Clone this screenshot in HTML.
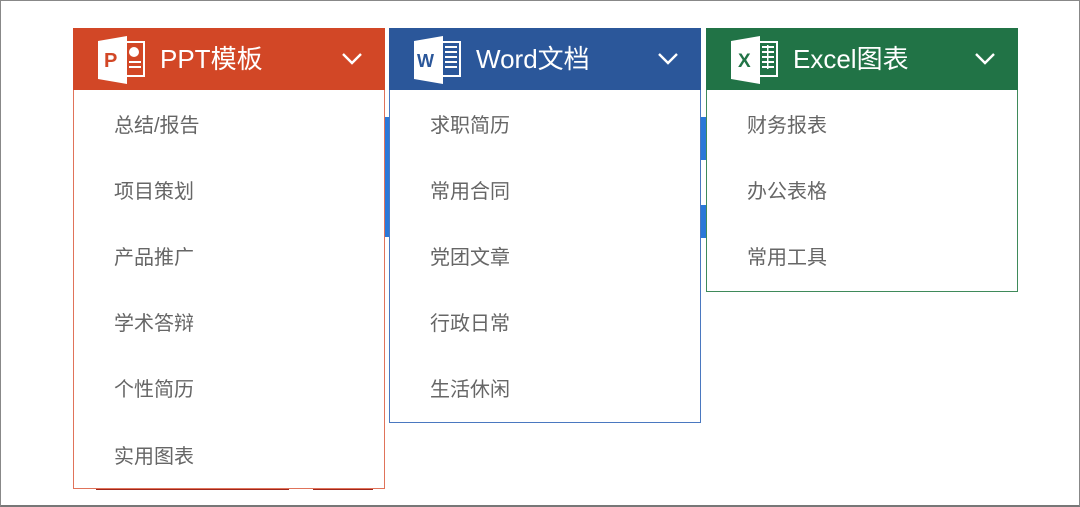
<!DOCTYPE html>
<html><head><meta charset="utf-8"><style>
*{margin:0;padding:0;box-sizing:border-box}
body{width:1080px;height:507px;background:#fff;position:relative;overflow:hidden;font-family:"Liberation Sans","Noto Sans CJK SC",sans-serif}
.frame{position:absolute;left:0;top:0;width:1080px;height:507px;border:1px solid #888;border-bottom:2px solid #777}
.p{position:absolute;top:28px;width:312px;background:#fff}
.h{height:62px;position:relative;color:#fff}
.h .t{position:absolute;left:87px;top:13px;font-size:26px;line-height:36px}
.h svg.ic{position:absolute;left:24px;top:8px}
.h .cv{position:absolute;right:22px;top:24px}
.m{position:absolute;left:40px;font-size:20px;color:#666;line-height:28px}
</style></head><body>
<div class="frame"></div>
<div style="position:absolute;left:384px;top:117px;width:6px;height:120px;background:#2a78d8"></div>
<div style="position:absolute;left:701px;top:117px;width:5px;height:43px;background:#2a78d8"></div>
<div style="position:absolute;left:701px;top:205px;width:5px;height:33px;background:#2a78d8"></div>
<div style="position:absolute;left:96px;top:487px;width:193px;height:3px;background:#a0261c"></div>
<div style="position:absolute;left:313px;top:487px;width:60px;height:3px;background:#a0261c"></div>

<div class="p" style="left:73px;height:461px;border:1px solid #e0735a;border-top:none">
<div class="h" style="background:#d24726;margin:0 -1px">
<svg class="ic" width="50" height="48" viewBox="0 0 50 48"><path d="M1 5 L30 0 L30 48 L1 43Z" fill="#fff"/><rect x="28" y="5" width="20" height="36" fill="#fff"/><rect x="30" y="7" width="16" height="32" fill="#d24726"/><circle cx="37" cy="16" r="5" fill="#fff"/><rect x="32" y="25" width="12" height="2" fill="#fff"/><rect x="32" y="30" width="12" height="2" fill="#fff"/><text x="7" y="31" font-size="20" font-weight="bold" fill="#d24726" font-family="Liberation Sans">P</text></svg>
<div class="t">PPT模板</div>
<svg class="cv" width="22" height="14"><path d="M2 2 L11 11 L20 2" stroke="#fff" stroke-width="2.4" fill="none"/></svg>
</div>
<div class="m" style="top:84px">总结/报告</div>
<div class="m" style="top:150px">项目策划</div>
<div class="m" style="top:216px">产品推广</div>
<div class="m" style="top:282px">学术答辩</div>
<div class="m" style="top:348px">个性简历</div>
<div class="m" style="top:415px">实用图表</div>
</div>

<div class="p" style="left:389px;height:395px;border:1px solid #4a78c0;border-top:none">
<div class="h" style="background:#2b579a;margin:0 -1px">
<svg class="ic" width="50" height="48" viewBox="0 0 50 48"><path d="M1 5 L30 0 L30 48 L1 43Z" fill="#fff"/><rect x="28" y="5" width="20" height="36" fill="#fff"/><rect x="30" y="7" width="16" height="32" fill="#2b579a"/><g fill="#fff"><rect x="32" y="10" width="12" height="2"/><rect x="32" y="15" width="12" height="2"/><rect x="32" y="20" width="12" height="2"/><rect x="32" y="25" width="12" height="2"/><rect x="32" y="30" width="12" height="2"/></g><text x="4" y="31" font-size="18" font-weight="bold" fill="#2b579a" font-family="Liberation Sans">W</text></svg>
<div class="t">Word文档</div>
<svg class="cv" width="22" height="14"><path d="M2 2 L11 11 L20 2" stroke="#fff" stroke-width="2.4" fill="none"/></svg>
</div>
<div class="m" style="top:84px">求职简历</div>
<div class="m" style="top:150px">常用合同</div>
<div class="m" style="top:216px">党团文章</div>
<div class="m" style="top:282px">行政日常</div>
<div class="m" style="top:348px">生活休闲</div>
</div>

<div class="p" style="left:706px;height:264px;border:1px solid #3f8a5a;border-top:none">
<div class="h" style="background:#217346;margin:0 -1px">
<svg class="ic" width="50" height="48" viewBox="0 0 50 48"><path d="M1 5 L30 0 L30 48 L1 43Z" fill="#fff"/><rect x="28" y="5" width="20" height="36" fill="#fff"/><rect x="30" y="7" width="16" height="32" fill="#217346"/><g fill="#fff"><rect x="32" y="10" width="12" height="2"/><rect x="32" y="15" width="12" height="2"/><rect x="32" y="20" width="12" height="2"/><rect x="32" y="25" width="12" height="2"/><rect x="32" y="30" width="12" height="2"/><rect x="37" y="9" width="1.5" height="24"/></g><text x="8" y="31" font-size="19" font-weight="bold" fill="#217346" font-family="Liberation Sans">X</text></svg>
<div class="t">Excel图表</div>
<svg class="cv" width="22" height="14"><path d="M2 2 L11 11 L20 2" stroke="#fff" stroke-width="2.4" fill="none"/></svg>
</div>
<div class="m" style="top:84px">财务报表</div>
<div class="m" style="top:150px">办公表格</div>
<div class="m" style="top:216px">常用工具</div>
</div>
</body></html>
